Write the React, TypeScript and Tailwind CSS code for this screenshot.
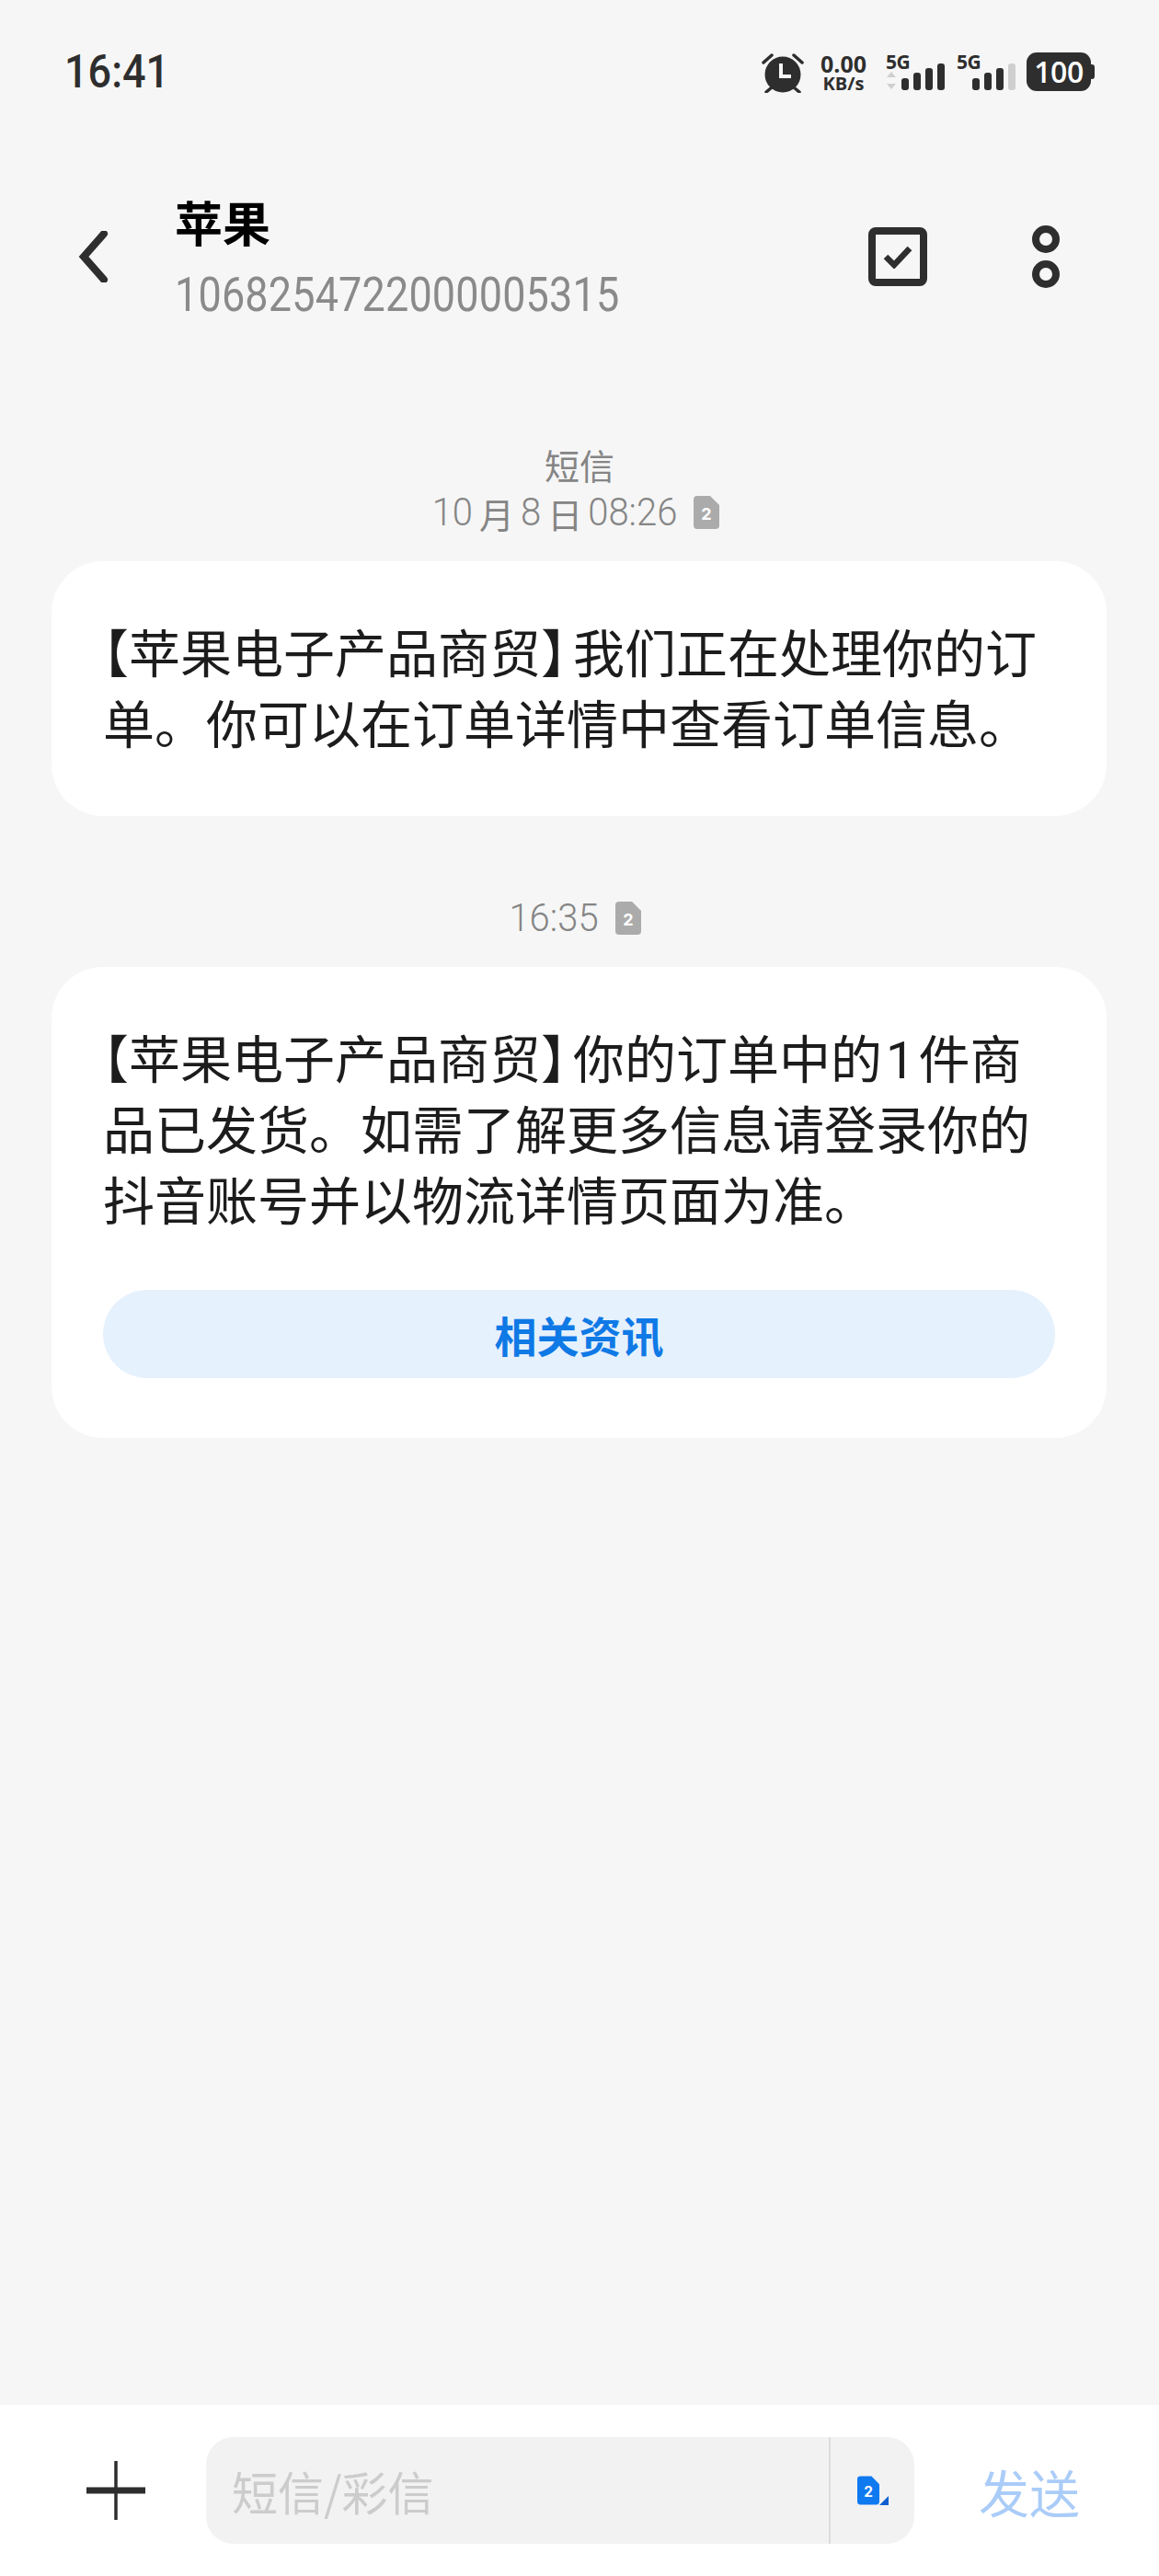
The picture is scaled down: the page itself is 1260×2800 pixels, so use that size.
const cjk = "font-['Noto_Sans_CJK_SC','Noto_Sans',sans-serif]";
const digits = "font-['Roboto',sans-serif]";

function SimBadge({ bg, size }: { bg: string; size: string }) {
  return (
    <svg viewBox="0 0 28 36" className={size}>
      <path d={"M4 0H18L28 10V32Q28 36 24 36H4Q0 36 0 32V4Q0 0 4 0Z"} fill={bg} />
      <text x="14" y="26" textAnchor="middle" fontSize="18" fontWeight="700" fill="#fff" fontFamily="Inter, sans-serif">2</text>
    </svg>
  );
}

function Signal({ muted, gap }: { muted: boolean; gap: string }) {
  return (
    <div className={`${gap} w-[64px] relative h-[42px]`}>
      <span className="block font-['Open_Sans',sans-serif] font-bold text-[21px] leading-[21px] text-[#2e2e2e] tracking-[-0.5px]">5G</span>
      <svg viewBox="0 0 64 30" className="absolute left-0 bottom-0 w-[64px] h-[30px]">
        {!muted && <path d="M5 2L10 8H0ZM5 21L0 15H10Z" fill="#cfcfcf" transform="translate(1 7)" />}
        <rect x="17" y="16" width="8" height="13" rx="3" fill="#2e2e2e" />
        <rect x="30" y="10" width="8" height="19" rx="3" fill="#2e2e2e" />
        <rect x="43" y="5" width="8" height="24" rx="3" fill="#2e2e2e" />
        <rect x="56" y="0" width="8" height="29" rx="3" fill={muted ? "#cfcfcf" : "#2e2e2e"} />
      </svg>
    </div>
  );
}

function StatusIcons() {
  return (
    <div className="flex items-start">
      <svg viewBox="0 0 46 44" className="w-[46px] h-[44px]">
        <circle cx="23" cy="24" r="19.5" fill="#2e2e2e" />
        <path d="M21 12V26H32" stroke="#f6f6f6" strokeWidth="4" fill="none" />
        <path d="M2 11L11 3M44 11L35 3M5 43L11 38M41 43L35 38" stroke="#2e2e2e" strokeWidth="3.5" strokeLinecap="round" />
      </svg>
      <div className="ml-[16px] w-[54px] flex flex-col items-center font-['Open_Sans',sans-serif] font-bold text-[#2e2e2e]">
        <span className="text-[25px] leading-[24px]">0.00</span>
        <span className="text-[20px] leading-[20px]">KB/s</span>
      </div>
      <Signal muted={false} gap="ml-[19px]" />
      <Signal muted gap="ml-[13px]" />
      <div className="ml-[12px] flex items-center">
        <div className="w-[70px] h-[42px] rounded-[11px] bg-[#2e2e2e] flex items-center justify-center font-['Open_Sans',sans-serif] font-semibold text-[32px] tracking-[-0.5px] leading-none text-white">100</div>
        <div className="w-[4px] h-[16px] rounded-r-[3px] bg-[#2e2e2e]" />
      </div>
    </div>
  );
}

function Card({ lines, children }: { lines: React.ReactNode[]; children?: React.ReactNode }) {
  return (
    <div className="mx-[56px] rounded-[56px] bg-white px-[56px] pt-[58px] pb-[65px] w-[1147px]">
      {lines.map((line, i) => (
        <div key={i} className="text-[56px] leading-[77px] text-[#1c1c1c] whitespace-nowrap h-[77px]">{line}</div>
      ))}
      {children}
    </div>
  );
}

function Sender() {
  return (
    <>
      <span className="[font-feature-settings:'halt']">【</span>
      苹果电子产品商贸
      <span className="mr-[7px] [font-feature-settings:'halt']">】</span>
    </>
  );
}

export default function App() {
  return (
    <div className={`w-[1260px] h-[2800px] bg-[#f6f6f6] flex flex-col ${cjk}`}>
      <div className="h-[207px] pl-[70px] pr-[70px] pt-[57px] flex justify-between items-start">
        <span className={`${digits} font-medium text-[45px] leading-[42px] text-[#2e2e2e] scale-y-[1.1]`}>16:41</span>
        <StatusIcons />
      </div>

      <div className="h-[144px] flex items-center">
        <svg viewBox="0 0 32 56" className="ml-[84px] w-[34px] h-[56px]">
          <path d="M28 3L6 28L28 53" stroke="#2e2e2e" strokeWidth="8" fill="none" strokeLinecap="round" />
        </svg>
        <div className="ml-[72px]">
          <div className="text-[52px] leading-[68px] mb-[16px] font-bold text-black">苹果</div>
          <div className={`${digits} text-[45px] leading-[60px] tracking-[0.15px] text-[#8a8a8a] scale-y-[1.15] origin-left`}>1068254722000005315</div>
        </div>
        <div className="ml-auto w-[64px] h-[64px] rounded-[8px] border-[8px] border-[#2e2e2e] flex items-center justify-center">
          <svg viewBox="0 0 32 26" className="w-[32px] h-[26px]">
            <path d="M3 13L12 22L29 4" stroke="#2e2e2e" strokeWidth="6.5" fill="none" />
          </svg>
        </div>
        <div className="ml-[114px] mr-[108px] w-[30px] h-[68px] flex flex-col justify-between">
          <div className="w-[30px] h-[30px] rounded-full border-[8px] border-[#2e2e2e]" />
          <div className="w-[30px] h-[30px] rounded-full border-[8px] border-[#2e2e2e]" />
        </div>
      </div>

      <div className="mt-[128px] flex flex-col items-center text-[38px] text-[#858585]">
        <span className="leading-[52px]">短信</span>
        <div className="flex items-center h-[52px] pr-[8px]">
          <span className={`${digits} font-light text-[40px] scale-y-[1.08]`}>10</span>
          <span className="ml-[7px]">月</span>
          <span className={`ml-[7px] ${digits} font-light text-[40px] scale-y-[1.08]`}>8</span>
          <span className="ml-[7px]">日</span>
          <span className={`ml-[6px] ${digits} font-light text-[40px] scale-y-[1.08]`}>08:26</span>
          <span className="ml-[18px]"><SimBadge bg="#ababab" size="w-[28px] h-[36px]" /></span>
        </div>
      </div>

      <div className="mt-[27px]">
        <Card lines={[<><Sender />我们正在处理你的订</>, "单。你可以在订单详情中查看订单信息。"]} />
      </div>

      <div className="mt-[85px] h-[52px] pr-[10px] flex items-center justify-center text-[#858585]">
        <span className={`${digits} font-light text-[40px] scale-y-[1.08]`}>16:35</span>
        <span className="ml-[18px]"><SimBadge bg="#ababab" size="w-[28px] h-[36px]" /></span>
      </div>

      <div className="mt-[27px]">
        <Card lines={[
          <><Sender />你的订单中的<span className={`${digits} mx-[4px]`}>1</span>件商</>,
          "品已发货。如需了解更多信息请登录你的",
          "抖音账号并以物流详情页面为准。",
        ]}>
          <div className="mt-[62px] h-[96px] rounded-[48px] bg-[#e5f1fd] flex items-center justify-center text-[46px] font-bold text-[#0f79e6]">相关资讯</div>
        </Card>
      </div>

      <div className="mt-auto h-[186px] bg-white flex items-center">
        <svg viewBox="0 0 64 64" className="ml-[94px] w-[64px] h-[64px]">
          <path d="M32 0V64" stroke="#2e2e2e" strokeWidth="3.5" strokeLinecap="round" />
          <path d="M0 32H64" stroke="#2e2e2e" strokeWidth="7" strokeLinecap="round" />
        </svg>
        <div className="ml-[66px] w-[770px] h-[116px] rounded-[30px] bg-[#f2f2f2] flex items-center overflow-hidden">
          <span className="ml-[28px] text-[50px] text-[#cccccc] flex-1">短信/彩信</span>
          <div className="w-[2px] h-full bg-[#dcdcdc]" />
          <div className="w-[91px] flex items-center justify-center">
            <SimBadge bg="#0f79f0" size="w-[24px] h-[32px]" />
            <svg viewBox="0 0 10 10" className="w-[10px] h-[10px] self-end mt-[22px]"><path d="M10 0V10H0Z" fill="#0f5fd0" /></svg>
          </div>
        </div>
        <span className="ml-[70px] text-[55px] leading-none text-[#aaccf8]">发送</span>
      </div>
    </div>
  );
}
